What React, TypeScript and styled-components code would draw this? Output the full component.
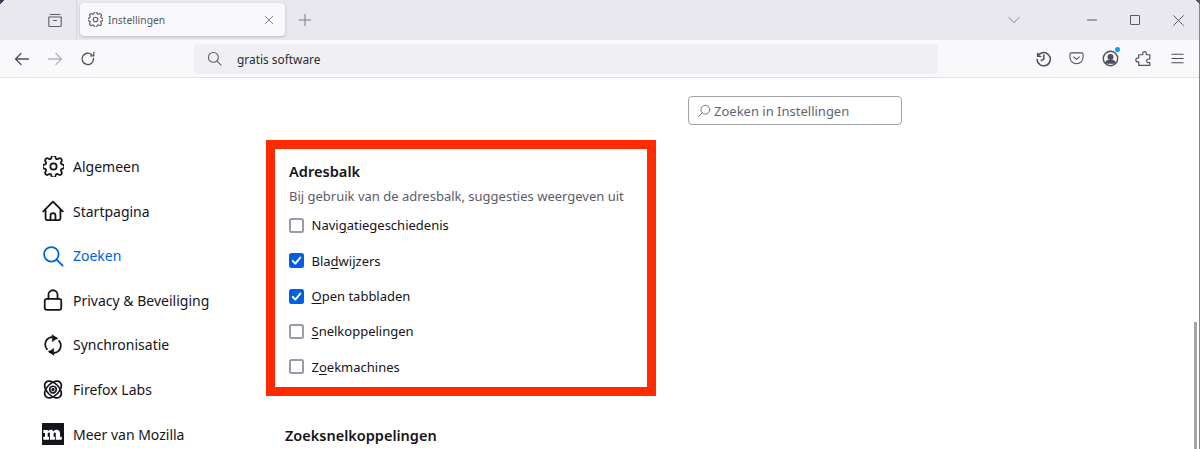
import React from 'react';
import styled, {createGlobalStyle} from 'styled-components';

const GlobalStyle = createGlobalStyle`
    html, body {
        margin: 0;
        padding: 0;
        background: #fff;
        overflow: hidden;
    }
    body {
        font-family: "Noto Sans", "Open Sans", sans-serif;
        color: #15141a;
    }
`;

const Page = styled.div`
    position: relative;
    width: 1200px;
    height: 449px;
    overflow: hidden;
    display: flex;
    flex-direction: column;
    background: #fff;
`;

const TabBar = styled.div`
    height: 40px;
    flex-shrink: 0;
    background: #e9e8ee;
    display: flex;
    align-items: center;
    padding-left: 47px;
`;

const TabsButton = styled.div`
    width: 29px;
    display: flex;
    color: #5b5b66;
`;

const Separator = styled.div`
    width: 1px;
    height: 40px;
    background: #d8d7de;
    margin-right: 3px;
`;

const Tab = styled.div`
    width: 205px;
    height: 33px;
    margin-top: -1px;
    box-sizing: border-box;
    padding: 0 10px 0 8px;
    display: flex;
    align-items: center;
    gap: 5px;
    background: #f9f9fb;
    border-radius: 4px;
    box-shadow: 0 1px 3px rgba(0, 0, 0, 0.2);
    color: #5b5b66;
`;

const TabLabel = styled.span`
    flex: 1;
    font-size: 10.3px;
    color: #55555f;
`;

const NewTab = styled.div`
    display: flex;
    margin-left: 13px;
    color: #77767f;
`;

const Spacer = styled.div`
    flex: 1;
`;

const WindowControls = styled.div`
    display: flex;
    align-items: center;
    color: #55555f;
    padding-right: 15px;
`;

const Chevron = styled.div`
    display: flex;
    margin-right: 35px;
    color: #77767f;
`;

const WindowButton = styled.div`
    display: flex;
    justify-content: center;
    width: 14px;
    margin-left: 29px;
`;

const Toolbar = styled.div`
    height: 37px;
    flex-shrink: 0;
    background: #f9f9fb;
    border-bottom: 1px solid #e4e4e8;
    display: flex;
    align-items: center;
    padding: 0 14px;
    color: #4f4f59;
`;

const NavButton = styled.div<{$disabled?: boolean}>`
    display: flex;
    width: 18px;
    margin-right: 15px;
    color: ${({$disabled}) => ($disabled ? '#b4b4ba' : '#4f4f59')};
`;

const UrlBar = styled.div`
    width: 744px;
    height: 30px;
    margin-left: 81px;
    border-radius: 4px;
    background: #f0f0f4;
    display: flex;
    align-items: center;
    padding-left: 13px;
    box-sizing: border-box;
    gap: 15px;
    color: #5b5b66;
`;

const UrlText = styled.span`
    font-size: 11.9px;
    color: #2b2a33;
`;

const ToolbarIcons = styled.div`
    margin-left: auto;
    display: flex;
    align-items: center;
    gap: 15.5px;
`;

const ToolIcon = styled.div`
    position: relative;
    display: flex;
    width: 18px;
    justify-content: center;
`;

const Badge = styled.span`
    position: absolute;
    top: -3px;
    right: -1px;
    width: 5px;
    height: 5px;
    border-radius: 50%;
    background: #0a9dff;
`;

const Content = styled.div`
    flex: 1;
    display: flex;
    min-height: 0;
`;

const Sidebar = styled.nav`
    width: 266px;
    flex-shrink: 0;
    box-sizing: border-box;
    padding: 77.5px 0 0 42px;
    display: flex;
    flex-direction: column;
    gap: 22.6px;
`;

const NavItem = styled.div<{$active?: boolean}>`
    display: flex;
    align-items: center;
    height: 22px;
    gap: 9px;
    font-size: 14px;
    color: ${({$active}) => ($active ? '#0061e0' : '#15141a')};
`;

const NavIcon = styled.div`
    width: 22px;
    height: 22px;
    display: flex;
    align-items: center;
    justify-content: center;
`;

const Main = styled.main`
    flex: 1;
    display: flex;
    flex-direction: column;
    align-items: flex-start;
`;

const SearchBox = styled.div`
    width: 214px;
    height: 29px;
    box-sizing: border-box;
    margin: 18px 0 15px 422px;
    border: 1px solid #a2a2a9;
    border-radius: 4px;
    display: flex;
    align-items: center;
    gap: 3px;
    padding-left: 8px;
    font-size: 13px;
    color: #65656f;
`;

const Highlight = styled.section`
    width: 390px;
    height: 256px;
    box-sizing: border-box;
    border: 9px solid #ff2a00;
    padding: 12px 14px 0 14px;
`;

const GroupTitle = styled.h2`
    margin: 0;
    font-size: 14.6px;
    line-height: 20px;
    font-weight: 600;
    color: #15141a;
`;

const GroupHint = styled.p`
    margin: 6px 0 0;
    font-size: 13px;
    line-height: 18px;
    color: #5b5b66;
`;

const OptionList = styled.div`
    display: flex;
    flex-direction: column;
    gap: 15.4px;
    margin-top: 10.25px;
`;

const Option = styled.label`
    display: flex;
    align-items: center;
    gap: 7.5px;
    height: 20px;
    font-size: 13px;
    color: #15141a;
`;

const Box = styled.span<{$checked?: boolean}>`
    width: 15px;
    height: 15px;
    box-sizing: border-box;
    border-radius: 2.5px;
    display: flex;
    align-items: center;
    justify-content: center;
    background: ${({$checked}) => ($checked ? '#0061e0' : '#fff')};
    border: ${({$checked}) => ($checked ? 'none' : '2px solid #9a9aa8')};
`;

const Key = styled.span`
    text-decoration: underline;
    text-underline-offset: 2px;
`;

const SectionTitle = styled.h2`
    margin: 29px 0 0 19px;
    font-size: 14.5px;
    line-height: 20px;
    font-weight: 600;
    color: #15141a;
`;

const ScrollThumb = styled.div`
    position: absolute;
    right: 3px;
    top: 322px;
    width: 3px;
    height: 127px;
    background: #a5a5a5;
`;

const EdgeLine = styled.div`
    position: absolute;
    right: 0;
    top: 0;
    bottom: 0;
    width: 1px;
    background: #8a8585;
`;

const Corner = styled.div<{$right?: boolean}>`
    position: absolute;
    top: 0;
    ${({$right}) => ($right ? 'right: 0;' : 'left: 0;')}
    width: 4px;
    height: 4px;
    background: ${({$right}) =>
        $right
            ? 'linear-gradient(45deg, transparent 50%, #4a5570 50%)'
            : 'linear-gradient(135deg, #2c3e63 50%, transparent 50%)'};
`;

interface IconProps {
    size?: number;
    width?: number;
    children: React.ReactNode;
}

const Icon = ({size = 16, width = 1.3, children}: IconProps) => (
    <svg
        width={size}
        height={size}
        viewBox="0 0 16 16"
        fill="none"
        stroke="currentColor"
        strokeWidth={width}
        strokeLinecap="round"
        strokeLinejoin="round"
    >
        {children}
    </svg>
);

const Gear = ({size, width}: {size: number; width?: number}) => (
    <svg
        width={size}
        height={size}
        viewBox="0 0 24 24"
        fill="none"
        stroke="currentColor"
        strokeWidth={width ?? 2}
        strokeLinecap="round"
        strokeLinejoin="round"
    >
        <path d="M9.67 1.5a2.4 2.4 0 0 1 4.66 0l.22.9a1.7 1.7 0 0 0 2.5 1.04l.8-.48a2.4 2.4 0 0 1 3.3 3.3l-.48.8a1.7 1.7 0 0 0 1.04 2.5l.9.22a2.4 2.4 0 0 1 0 4.66l-.9.22a1.7 1.7 0 0 0-1.04 2.5l.48.8a2.4 2.4 0 0 1-3.3 3.3l-.8-.48a1.7 1.7 0 0 0-2.5 1.04l-.22.9a2.4 2.4 0 0 1-4.66 0l-.22-.9a1.7 1.7 0 0 0-2.5-1.04l-.8.48a2.4 2.4 0 0 1-3.3-3.3l.48-.8a1.7 1.7 0 0 0-1.04-2.5l-.9-.22a2.4 2.4 0 0 1 0-4.66l.9-.22a1.7 1.7 0 0 0 1.04-2.5l-.48-.8a2.4 2.4 0 0 1 3.3-3.3l.8.48a1.7 1.7 0 0 0 2.5-1.04z" />
        <circle cx="12" cy="12" r="3.6" />
    </svg>
);

const Search = ({size, width}: {size: number; width?: number}) => (
    <Icon size={size} width={width}>
        <circle cx="6.8" cy="6.8" r="5.3" />
        <path d="M10.7 10.7 15 15" />
    </Icon>
);

const items = [
    {
        label: 'Algemeen',
        icon: <Gear size={21} width={2} />,
    },
    {
        label: 'Startpagina',
        icon: (
            <Icon size={22}>
                <path d="M.9 8.3 8 1.2l7.1 7.1M2.6 6.8v6.4a1.5 1.5 0 0 0 1.5 1.5h7.8a1.5 1.5 0 0 0 1.5-1.5V6.8M6.2 14.7v-3.3a1.8 1.8 0 0 1 3.6 0v3.3" />
            </Icon>
        ),
    },
    {
        label: 'Zoeken',
        active: true,
        icon: <Search size={22} />,
    },
    {
        label: 'Privacy & Beveiliging',
        icon: (
            <Icon size={22}>
                <rect x="2" y="7.2" width="12" height="8" rx="1.5" />
                <path d="M4.7 7.2V4.2a3.3 3.3 0 0 1 6.6 0v3" />
            </Icon>
        ),
    },
    {
        label: 'Synchronisatie',
        icon: (
            <Icon size={22}>
                <path d="M10.8 3.3A5.3 5.3 0 0 0 3.6 11M5.2 12.7A5.3 5.3 0 0 0 12.4 5" />
                <path d="M7.6.8 10.8 3 7.8 5.3z" fill="currentColor" strokeWidth=".6" />
                <path d="M8.4 15.200 5.200 13l3-2.300z" fill="currentColor" strokeWidth=".6" />
            </Icon>
        ),
    },
    {
        label: 'Firefox Labs',
        icon: (
            <Icon size={23} width={1.2}>
                <ellipse cx="8" cy="8" rx="7.4" ry="4.400" transform="rotate(45 8 8)" />
                <ellipse cx="8" cy="8" rx="7.4" ry="4.400" transform="rotate(-45 8 8)" />
                <circle cx="8" cy="8" r="2.400" fill="#fff" />
                <circle cx="8" cy="8" r=".6" fill="currentColor" />
            </Icon>
        ),
    },
    {
        label: 'Meer van Mozilla',
        icon: (
            <svg width="22" height="22" viewBox="0 0 22 22">
                <rect width="22" height="22" fill="#15141a" />
                <path
                    d="M1.3 7h4.500v1.500c.8-1.100 1.800-1.700 3-1.700 1.300 0 2.200.6 2.700 1.700.9-1.100 1.900-1.700 3.200-1.700 2.100 0 3.300 1.200 3.300 3.400v3.600h1.700v2.900h-5.900v-6c0-.8-.3-1.200-.9-1.200-.6 0-1.100.4-1.300 1v3.300h1.300v2.900H7.900v-6c0-.8-.3-1.200-.9-1.200-.6 0-1.100.4-1.300 1v3.300h1.300v2.900H1.300v-2.900H3V9.900H1.300z"
                    fill="#fff"
                />
            </svg>
        ),
    },
];

function Tick() {
    return (
        <svg width="11" height="11" viewBox="0 0 16 16" fill="none" stroke="#fff" strokeWidth="2.8" strokeLinecap="round" strokeLinejoin="round">
            <path d="M2.5 8.5 6.3 12.500 13.500 3.800" />
        </svg>
    );
}

const App = () => (
    <Page>
        <GlobalStyle />
        <TabBar>
            <TabsButton>
                <Icon size={16} width={1.1}>
                    <path d="M3 2.5h10M1.8 5h12.4v8.500a1 1 0 0 1-1 1H2.800a1 1 0 0 1-1-1zM6.500 8.500h3" />
                </Icon>
            </TabsButton>
            <Separator />
            <Tab>
                <Gear size={15} width={1.8} />
                <TabLabel>Instellingen</TabLabel>
                <Icon size={12} width={1}>
                    <path d="M3 3l10 10M13 3 3 13" />
                </Icon>
            </Tab>
            <NewTab>
                <Icon size={14} width={1.1}>
                    <path d="M8 1.500v13M1.500 8h13" />
                </Icon>
            </NewTab>
            <Spacer />
            <WindowControls>
                <Chevron>
                    <Icon size={14} width={1}>
                        <path d="M2 5l6 6 6-6" />
                    </Icon>
                </Chevron>
                <WindowButton>
                    <Icon size={12} width={1.3}>
                        <path d="M2 8h12" />
                    </Icon>
                </WindowButton>
                <WindowButton>
                    <Icon size={12} width={1.3}>
                        <rect x="2" y="2" width="12" height="12" rx=".5" />
                    </Icon>
                </WindowButton>
                <WindowButton>
                    <Icon size={13} width={1.2}>
                        <path d="M2 2l12 12M14 2 2 14" />
                    </Icon>
                </WindowButton>
            </WindowControls>
        </TabBar>
        <Toolbar>
            <NavButton>
                <Icon size={16}>
                    <path d="M14.500 8h-13M7 2.500 1.500 8 7 13.500" />
                </Icon>
            </NavButton>
            <NavButton $disabled>
                <Icon size={16}>
                    <path d="M1.500 8h13M9 2.500 14.500 8 9 13.500" />
                </Icon>
            </NavButton>
            <NavButton>
                <Icon size={16}>
                    <path d="M13.500 7.500A5.700 5.700 0 1 1 11.600 3.600M13.800 1.500v3.300h-3.300" />
                </Icon>
            </NavButton>
            <UrlBar>
                <Search size={15} width={1.1} />
                <UrlText>gratis software</UrlText>
            </UrlBar>
            <ToolbarIcons>
                <ToolIcon>
                    <Icon size={17} width={1.4}>
                        <path d="M2.500 3v3h3M2.600 6a6.200 6.200 0 1 1-.6 3M8.300 4.800v3.800l-2.300 1.300" />
                    </Icon>
                </ToolIcon>
                <ToolIcon>
                    <Icon size={15} width={1.1}>
                        <path d="M2.500 2h11A1.500 1.500 0 0 1 15 3.500V7A7 6.500 0 0 1 1 7V3.500A1.500 1.500 0 0 1 2.500 2zM5 6.200l3 2.800 3-2.800" />
                    </Icon>
                </ToolIcon>
                <ToolIcon>
                    <Icon size={17}>
                        <circle cx="8" cy="8" r="6.800" />
                        <circle cx="8" cy="6.500" r="2.200" fill="currentColor" />
                        <path d="M3.500 12.200c.5-1.800 2-2.700 4.500-2.700s4 .9 4.500 2.700z" fill="currentColor" />
                    </Icon>
                    <Badge />
                </ToolIcon>
                <ToolIcon>
                    <Icon size={17} width={1.1}>
                        <path d="M9 1.500a1.700 1.700 0 0 1 1.700 1.700V4.500h3.300v4h-1.400a1.700 1.700 0 0 0 0 3.400H14v2.600H3.500v-3.300H2.700a1.900 1.900 0 0 1 0-3.800h.8V4.500h3.800V3.200A1.700 1.700 0 0 1 9 1.500z" />
                    </Icon>
                </ToolIcon>
                <ToolIcon>
                    <Icon size={15} width={1.2}>
                        <path d="M2 3.500h12M2 8h12M2 12.500h12" />
                    </Icon>
                </ToolIcon>
            </ToolbarIcons>
        </Toolbar>
        <Content>
            <Sidebar>
                {items.map(({label, icon, active}) => (
                    <NavItem key={label} $active={active}>
                        <NavIcon>{icon}</NavIcon>
                        {label}
                    </NavItem>
                ))}
            </Sidebar>
            <Main>
                <SearchBox>
                    <Icon size={14} width={1}>
                        <circle cx="9.500" cy="6.500" r="5" />
                        <path d="M6 10 1.500 14.500" />
                    </Icon>
                    Zoeken in Instellingen
                </SearchBox>
                <Highlight>
                    <GroupTitle>Adresbalk</GroupTitle>
                    <GroupHint>Bij gebruik van de adresbalk, suggesties weergeven uit</GroupHint>
                    <OptionList>
                        <Option>
                            <Box />
                            <span>Navi<Key>g</Key>atiegeschiedenis</span>
                        </Option>
                        <Option>
                            <Box $checked><Tick /></Box>
                            <span>Bla<Key>d</Key>wijzers</span>
                        </Option>
                        <Option>
                            <Box $checked><Tick /></Box>
                            <span><Key>O</Key>pen tabbladen</span>
                        </Option>
                        <Option>
                            <Box />
                            <span><Key>S</Key>nelkoppelingen</span>
                        </Option>
                        <Option>
                            <Box />
                            <span>Z<Key>o</Key>ekmachines</span>
                        </Option>
                    </OptionList>
                </Highlight>
                <SectionTitle>Zoeksnelkoppelingen</SectionTitle>
            </Main>
        </Content>
        <ScrollThumb />
        <EdgeLine />
        <Corner />
        <Corner $right />
    </Page>
);

export default App;
